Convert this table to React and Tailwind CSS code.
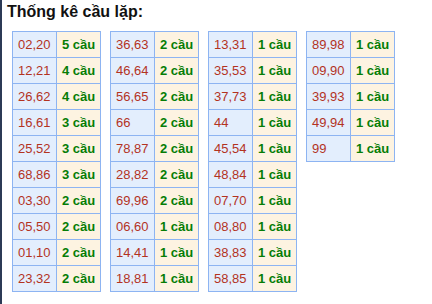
import React from 'react';

const tables = [
    [['02,20', 5], ['12,21', 4], ['26,62', 4], ['16,61', 3], ['25,52', 3], ['68,86', 3], ['03,30', 2], ['05,50', 2], ['01,10', 2], ['23,32', 2]],
    [['36,63', 2], ['46,64', 2], ['56,65', 2], ['66', 2], ['78,87', 2], ['28,82', 2], ['69,96', 2], ['06,60', 1], ['14,41', 1], ['18,81', 1]],
    [['13,31', 1], ['35,53', 1], ['37,73', 1], ['44', 1], ['45,54', 1], ['48,84', 1], ['07,70', 1], ['08,80', 1], ['38,83', 1], ['58,85', 1]],
    [['89,98', 1], ['09,90', 1], ['39,93', 1], ['49,94', 1], ['99', 1]],
];

function LoopTable({ rows }) {
    return (
        <div className="border-l border-t border-[#8db4f2] self-start">
            {rows.map(([pair, count]) => (
                <div key={pair} className="flex h-[26px]">
                    <div className="w-[44px] border-r border-b border-[#8db4f2] bg-[#e3eefd] pl-[5px] flex items-center text-[13px] text-[#b3331f]">
                        {pair}
                    </div>
                    <div className="w-[44px] border-r border-b border-[#8db4f2] bg-[#fdf3e1] pl-[5px] flex items-center text-[13px] font-bold text-[#067d06]">
                        {count} cầu
                    </div>
                </div>
            ))}
        </div>
    );
}

export default function App() {
    return (
        <div className="flex min-h-[304px] bg-white font-['Liberation_Sans',Arial,sans-serif]">
            {/* left edge bar */}
            <div className="w-[2px] bg-[#2c3a56] flex-shrink-0"></div>

            <div className="flex-1">
                <h2 className="mt-[2px] pl-[5px] text-[16px] leading-[20px] font-bold text-[#111]">Thống kê cầu lặp:</h2>
                <div className="mt-[9px] pl-[10px] flex gap-[9px]">
                    {tables.map((rows, i) => (
                        <LoopTable key={i} rows={rows} />
                    ))}
                </div>
            </div>
        </div>
    );
}
